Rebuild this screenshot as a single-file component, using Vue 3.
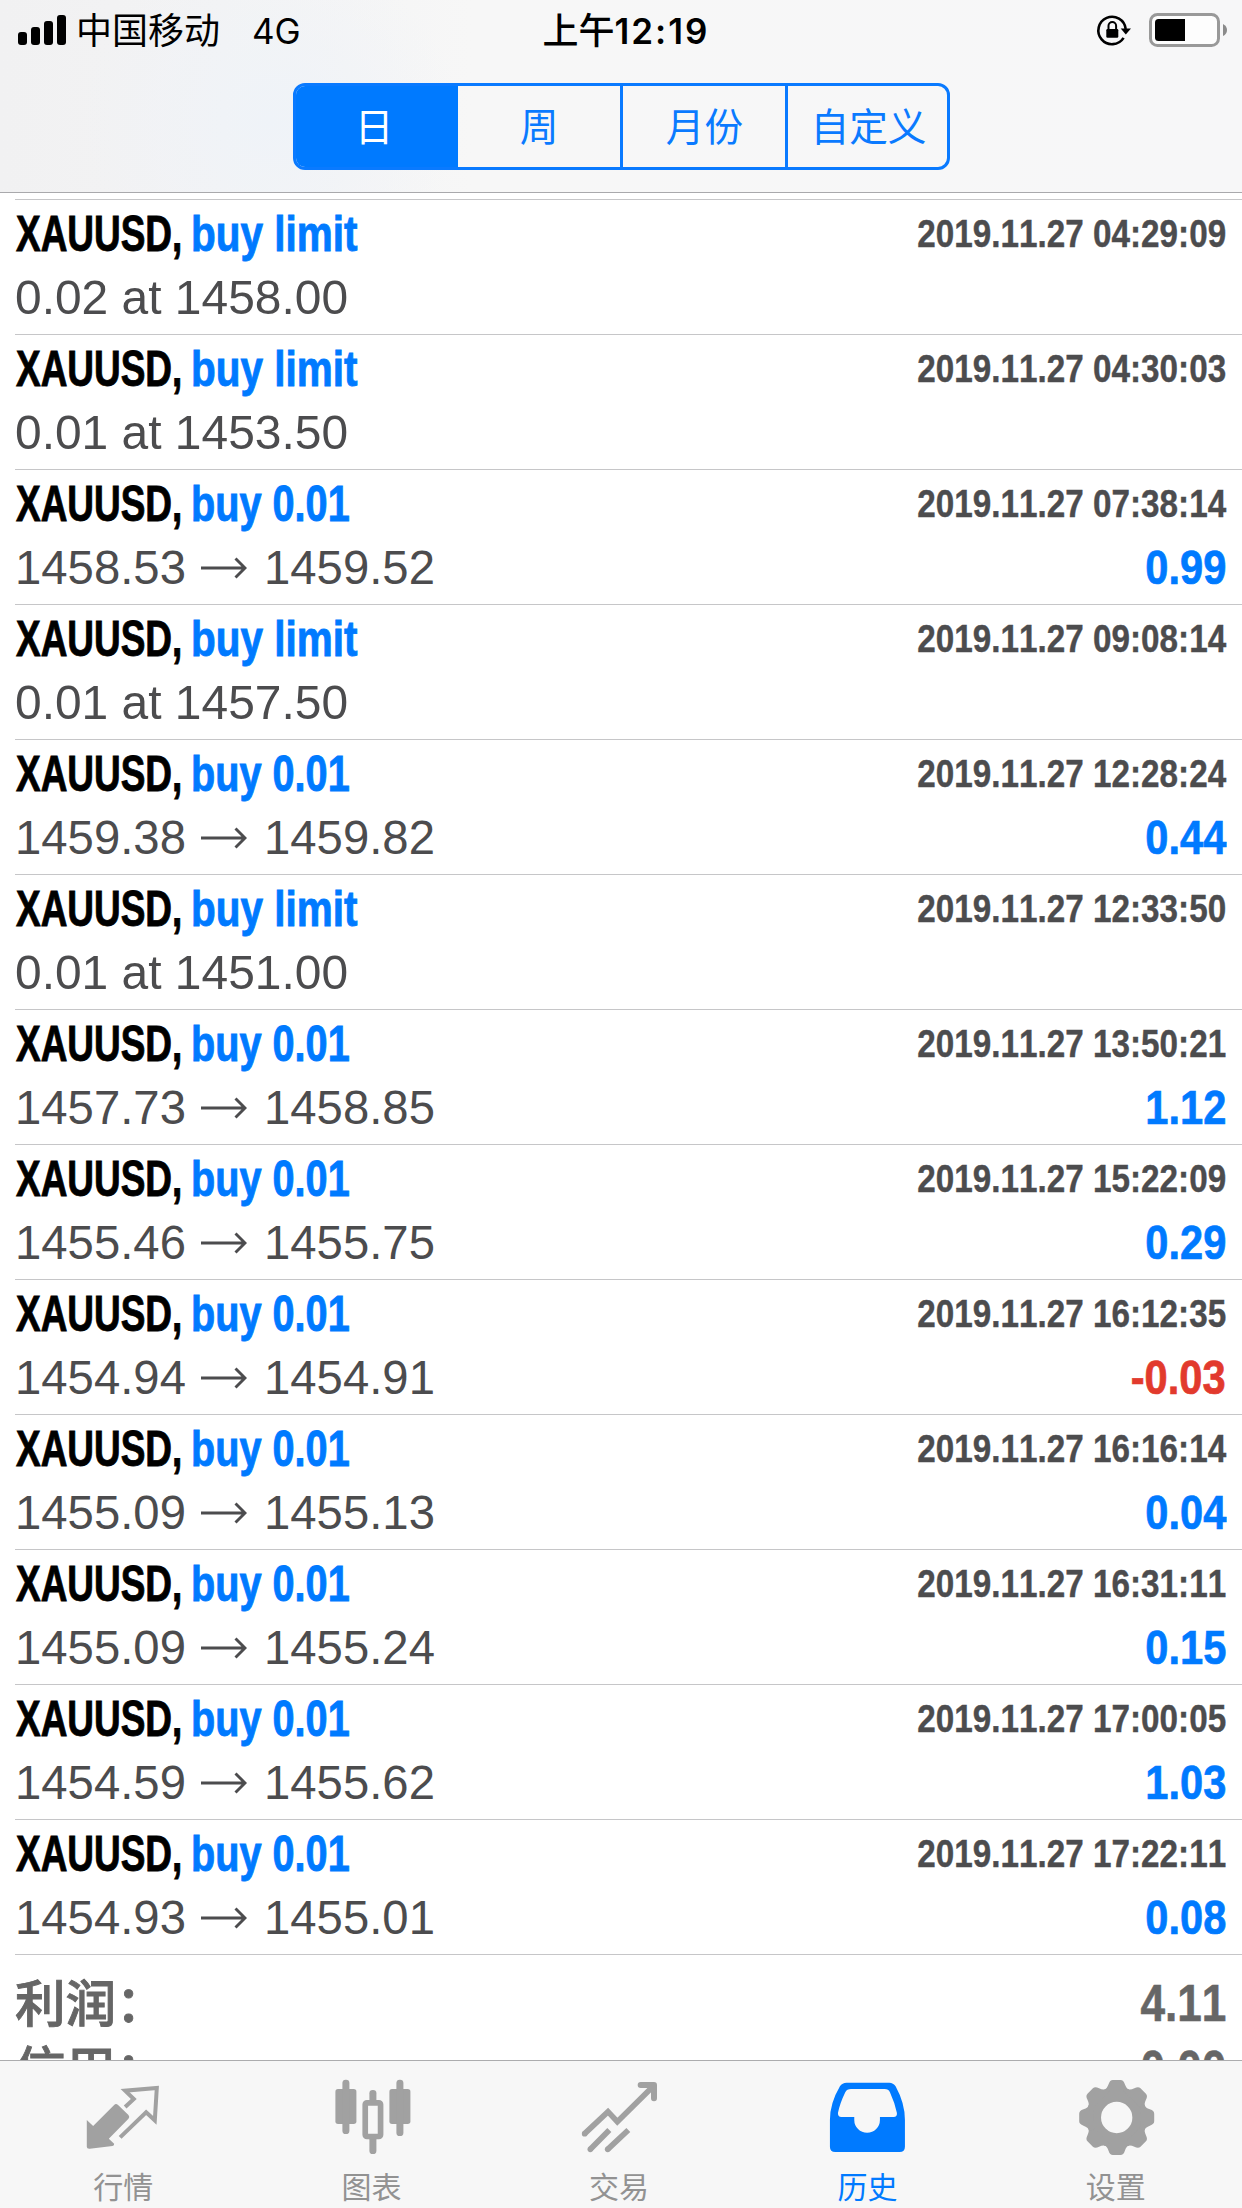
<script setup>
const ranges = ['日', '周', '月份', '自定义']

const deals = [
  { kind: 'limit', side: 'buy limit', time: '2019.11.27 04:29:09', text: '0.02 at 1458.00' },
  { kind: 'limit', side: 'buy limit', time: '2019.11.27 04:30:03', text: '0.01 at 1453.50' },
  { kind: 'market', side: 'buy 0.01', time: '2019.11.27 07:38:14', open: '1458.53', close: '1459.52', profit: '0.99' },
  { kind: 'limit', side: 'buy limit', time: '2019.11.27 09:08:14', text: '0.01 at 1457.50' },
  { kind: 'market', side: 'buy 0.01', time: '2019.11.27 12:28:24', open: '1459.38', close: '1459.82', profit: '0.44' },
  { kind: 'limit', side: 'buy limit', time: '2019.11.27 12:33:50', text: '0.01 at 1451.00' },
  { kind: 'market', side: 'buy 0.01', time: '2019.11.27 13:50:21', open: '1457.73', close: '1458.85', profit: '1.12' },
  { kind: 'market', side: 'buy 0.01', time: '2019.11.27 15:22:09', open: '1455.46', close: '1455.75', profit: '0.29' },
  { kind: 'market', side: 'buy 0.01', time: '2019.11.27 16:12:35', open: '1454.94', close: '1454.91', profit: '-0.03' },
  { kind: 'market', side: 'buy 0.01', time: '2019.11.27 16:16:14', open: '1455.09', close: '1455.13', profit: '0.04' },
  { kind: 'market', side: 'buy 0.01', time: '2019.11.27 16:31:11', open: '1455.09', close: '1455.24', profit: '0.15' },
  { kind: 'market', side: 'buy 0.01', time: '2019.11.27 17:00:05', open: '1454.59', close: '1455.62', profit: '1.03' },
  { kind: 'market', side: 'buy 0.01', time: '2019.11.27 17:22:11', open: '1454.93', close: '1455.01', profit: '0.08' },
]

const totals = [
  { label: '利润：', value: '4.11' },
  { label: '信用：', value: '0.00' },
]

const gearAngles = [0, 45, 90, 135, 180, 225, 270, 315]
</script>

<template>
  <div class="screen">
    <header class="top">
      <div class="status">
        <div class="carrier">
          <span class="signal"><i class="b1"></i><i class="b2"></i><i class="b3"></i><i class="b4"></i></span>
          <span class="operator">中国移动</span>
          <span class="network">4G</span>
        </div>
        <div class="clock"><span>上午</span><span class="digits">12:19</span></div>
        <div class="power">
          <svg class="lock" width="38" height="34" viewBox="0 0 38 34">
            <path d="M28.6 24.9A13.7 13.7 0 1 1 30.7 16" fill="none" stroke="#000" stroke-width="2.6" />
            <path d="M25.7 15.4H36L30.8 21.6Z" fill="#000" />
            <rect x="11.3" y="16" width="12" height="8.8" rx="1.2" fill="#000" />
            <path d="M13.5 17V12.8a3.8 3.8 0 0 1 7.6 0V17" fill="none" stroke="#000" stroke-width="2" />
          </svg>
          <svg class="battery" width="80" height="34" viewBox="0 0 80 34">
            <rect x="1.5" y="1.5" width="68" height="31" rx="7" fill="#fdfdfd" stroke="#999" stroke-width="3" />
            <path d="M36 6H9.5Q6 6 6 9.5V24.5Q6 28 9.5 28H36Z" fill="#000" />
            <path d="M74 11Q78 13 78 17T74 23Z" fill="#8b8b8b" />
          </svg>
        </div>
      </div>
      <nav class="segments">
        <span v-for="(r, i) in ranges" :key="r" class="segment" :class="{ on: i === 0 }">{{ r }}</span>
      </nav>
    </header>

    <main class="history">
      <ul class="deals">
        <li v-for="d in deals" :key="d.time" class="deal">
          <div class="line first">
            <div class="title">
              <span class="symbol">XAUUSD,</span>
              <span class="side" :class="d.kind">{{ d.side }}</span>
            </div>
            <span class="time">{{ d.time }}</span>
          </div>
          <div class="line second">
            <span v-if="d.kind === 'limit'" class="detail order">{{ d.text }}</span>
            <div v-else class="detail move">
              <span class="price">{{ d.open }}</span>
              <svg class="arrow" width="46" height="24" viewBox="0 0 46 24">
                <path d="M0 12H44M34.5 2.5L44 12L34.5 21.5" fill="none" stroke="#4c4c4e" stroke-width="2.9" />
              </svg>
              <span class="price">{{ d.close }}</span>
            </div>
            <span v-if="d.profit" class="profit" :class="{ loss: d.profit[0] === '-' }">{{ d.profit }}</span>
          </div>
        </li>
      </ul>
      <div class="totals">
        <div v-for="t in totals" :key="t.label" class="total">
          <span class="name">{{ t.label }}</span>
          <span class="sum">{{ t.value }}</span>
        </div>
      </div>
    </main>

    <footer class="tabs">
      <div class="tab">
        <svg class="icon" viewBox="252.6 438 240 252">
          <path fill="currentColor" d="M261 570L280 588L343 525Q348 519 354 524L386 555Q391 561 386 566L327 626L343 641Q344 647 338 648L270 656Q261 657 261 650Z" />
          <path fill="none" stroke="currentColor" stroke-width="12" d="M376 531L402 507L376 482L471 474L465 571L439 547L361 622" />
        </svg>
        <span>行情</span>
      </div>
      <div class="tab">
        <svg class="icon" viewBox="997.8 438 240 252">
          <g fill="currentColor">
            <rect x="1005" y="477" width="63" height="105" rx="8" />
            <rect x="1026" y="449" width="21" height="163" rx="10" />
            <rect x="1167" y="477" width="63" height="105" rx="8" />
            <rect x="1188" y="449" width="21" height="169" rx="10" />
            <rect x="1107" y="480" width="21" height="40" rx="10" />
            <rect x="1107" y="618" width="21" height="54" rx="10" />
          </g>
          <rect x="1094.5" y="518.5" width="46" height="101" rx="5" fill="none" stroke="currentColor" stroke-width="17" />
        </svg>
        <span>图表</span>
      </div>
      <div class="tab">
        <svg class="icon" viewBox="63 78 240 252">
          <g fill="none" stroke="currentColor" stroke-width="17">
            <path d="M74 251L144 185L172 215L278 110" />
            <path d="M242 105H282V145" stroke-width="18" stroke-linecap="round" stroke-linejoin="round" />
            <path d="M91 298L148 240M143 298L205 240" />
          </g>
          <g fill="currentColor">
            <path d="M258 105H282V130Z" />
            <circle cx="74" cy="251" r="8.5" />
            <circle cx="91" cy="298" r="8.5" />
            <circle cx="143" cy="298" r="8.5" />
          </g>
        </svg>
        <span>交易</span>
      </div>
      <div class="tab active">
        <svg class="icon" viewBox="807.2 78 240 252">
          <path fill="currentColor" fill-rule="evenodd" d="M860 98H988Q1000 98 1007 109Q1035 160 1035 210V290Q1035 306 1019 306H826Q810 306 810 290V210Q810 160 840 109Q847 98 860 98ZM873 117Q861 117 856 127Q840 160 834 189Q834 201 844 201H883V210A38.5 38.5 0 0 0 960 210V201H1001Q1012 201 1011 189Q1005 160 990 127Q986 117 974 117Z" />
        </svg>
        <span>历史</span>
      </div>
      <div class="tab">
        <svg class="icon" viewBox="473.4 438 240 252">
          <circle cx="589.5" cy="562.5" r="69" fill="none" stroke="currentColor" stroke-width="44" />
          <path
            v-for="a in gearAngles"
            :key="a"
            fill="currentColor"
            :transform="`rotate(${a} 589.5 562.5)`"
            d="M548 492L552 479Q560 477 565 463Q569 450 578 450H601Q610 450 614 463Q619 477 627 479L631 492Z"
          />
        </svg>
        <span>设置</span>
      </div>
    </footer>
  </div>
</template>

<style>
body {
  background: #fff;
}
</style>

<style scoped>
.screen {
  width: 1242px;
  height: 2208px;
  display: flex;
  flex-direction: column;
  overflow: hidden;
  background: #fff;
  font-family: "Liberation Sans", "Noto Sans CJK SC", sans-serif;
  font-kerning: none;
}

.top {
  flex: none;
  height: 193px;
  box-sizing: border-box;
  border-bottom: 1px solid #a9a9ac;
  background:
    radial-gradient(ellipse 190px 170px at 270px 120px, #eff3f8 0%, rgba(241, 244, 248, 0) 100%),
    linear-gradient(90deg, #f1f1f2 0%, #f3f3f4 18%, #f7f7f7 38%, #f7f7f8 100%);
}

.status {
  height: 60px;
  display: grid;
  grid-template-columns: 1fr auto 1fr;
  align-items: center;
  padding: 0 13px 0 18px;
  color: #000;
  font-family: Inter, "Noto Sans CJK SC", sans-serif;
  font-size: 36px;
}

.carrier,
.power,
.clock {
  display: flex;
  align-items: center;
  height: 60px;
}

.carrier span,
.clock span {
  line-height: 60px;
}

.operator,
.network {
  padding-top: 1px;
}

.clock {
  box-sizing: border-box;
  padding: 1px 0 0 5px;
  font-weight: 500;
}

.signal {
  display: flex;
  align-items: flex-end;
  gap: 4px;
  height: 30px;
  margin-right: 10px;
}

.signal i {
  width: 9px;
  border-radius: 3px;
  background: #000;
}

.b1 { height: 13px; }
.b2 { height: 18px; }
.b3 { height: 24px; }
.b4 { height: 30px; }

.operator {
  width: 176px;
}

.network {
  font-size: 35px;
}

.digits {
  font-size: 35px;
  font-weight: 600;
  letter-spacing: 2px;
}

.power {
  justify-content: flex-end;
}

.lock {
  margin-right: 16px;
}

.segments {
  width: 657px;
  height: 87px;
  box-sizing: border-box;
  margin: 23px 0 0 293px;
  display: flex;
  border: 3px solid #0a7aff;
  border-radius: 12px;
  overflow: hidden;
}

.segment {
  width: 165px;
  box-sizing: border-box;
  border-right: 3px solid #0a7aff;
  color: #0a7aff;
  font-family: "Noto Sans CJK SC", sans-serif;
  font-size: 38.7px;
  line-height: 77px;
  text-align: center;
}

.segment.on {
  width: 162px;
  padding-right: 6px;
  background: #007aff;
  border-right: 0;
  color: #fff;
}

.segment:nth-child(3) {
  padding-left: 1px;
}

.segment:last-child {
  width: 159px;
  padding-left: 2px;
  border-right: 0;
}

.history {
  flex: 1 1 0;
  min-height: 0;
  overflow: hidden;
  padding-top: 6px;
}

.deals {
  list-style: none;
  margin: 0 0 0 15px;
  padding: 0;
  border-top: 1px solid #c6c6c8;
}

.deal {
  height: 135px;
  box-sizing: border-box;
  padding: 4px 16px 0 0;
  border-bottom: 1px solid #c6c6c8;
}

.line {
  display: flex;
  justify-content: space-between;
  height: 60px;
  line-height: 60px;
  white-space: nowrap;
}

.second {
  margin-top: 3px;
}

.title {
  display: flex;
  padding-left: 0.7px;
  font-size: 50px;
  font-weight: 700;
  line-height: 61px;
  -webkit-text-stroke: 0.9px currentColor;
}

.symbol {
  width: 175.8px;
  color: #000;
  transform: scaleX(0.739);
  transform-origin: left;
}

.side {
  color: #007aff;
  transform-origin: left;
}

.side.limit {
  transform: scaleX(0.81);
}

.side.market {
  transform: scaleX(0.793);
}

.time {
  color: #4c4c4e;
  font-size: 39px;
  font-weight: 700;
  -webkit-text-stroke: 0.4px currentColor;
  transform: scaleX(0.853);
  transform-origin: right;
}

.detail {
  color: #4c4c4e;
  font-size: 48.5px;
}

.order {
  transform: scaleX(0.988);
  transform-origin: left;
}

.move {
  display: flex;
  align-items: center;
}

.price {
  transform: scaleX(0.975);
  transform-origin: left;
}

.arrow {
  margin: 2px 17px 0 11px;
}

.profit {
  color: #007aff;
  font-size: 49px;
  font-weight: 700;
  -webkit-text-stroke: 0.7px currentColor;
  transform: scaleX(0.85);
  transform-origin: right;
}

.profit.loss {
  color: #e23a2d;
}

.totals {
  padding: 15px 16px 0 15px;
  color: #666;
}

.total {
  display: flex;
  justify-content: space-between;
  height: 66px;
}

.name {
  font-family: "Noto Sans CJK SC", sans-serif;
  font-size: 50.5px;
  font-weight: 500;
  line-height: 60px;
  -webkit-text-stroke: 0.9px currentColor;
}

.sum {
  font-size: 51px;
  font-weight: 700;
  line-height: 68px;
  -webkit-text-stroke: 0.6px currentColor;
  transform: scaleX(0.865);
  transform-origin: right;
}

.tabs {
  flex: none;
  height: 148px;
  box-sizing: border-box;
  display: flex;
  border-top: 1px solid #acacae;
  background: #f7f7f7;
}

.tab {
  flex: 1 1 0;
  display: flex;
  flex-direction: column;
  align-items: center;
  padding-top: 15px;
  color: #a1a1a1;
  font-family: "Noto Sans CJK SC", sans-serif;
  font-size: 30px;
  line-height: 44px;
}

.tab span {
  margin-top: 3px;
  padding-right: 2px;
  color: #929292;
}

.tab:nth-child(n + 3) span {
  padding-right: 4px;
}

.tab.active,
.tab.active span {
  color: #007aff;
}

.icon {
  width: 80px;
  height: 84px;
}
</style>
